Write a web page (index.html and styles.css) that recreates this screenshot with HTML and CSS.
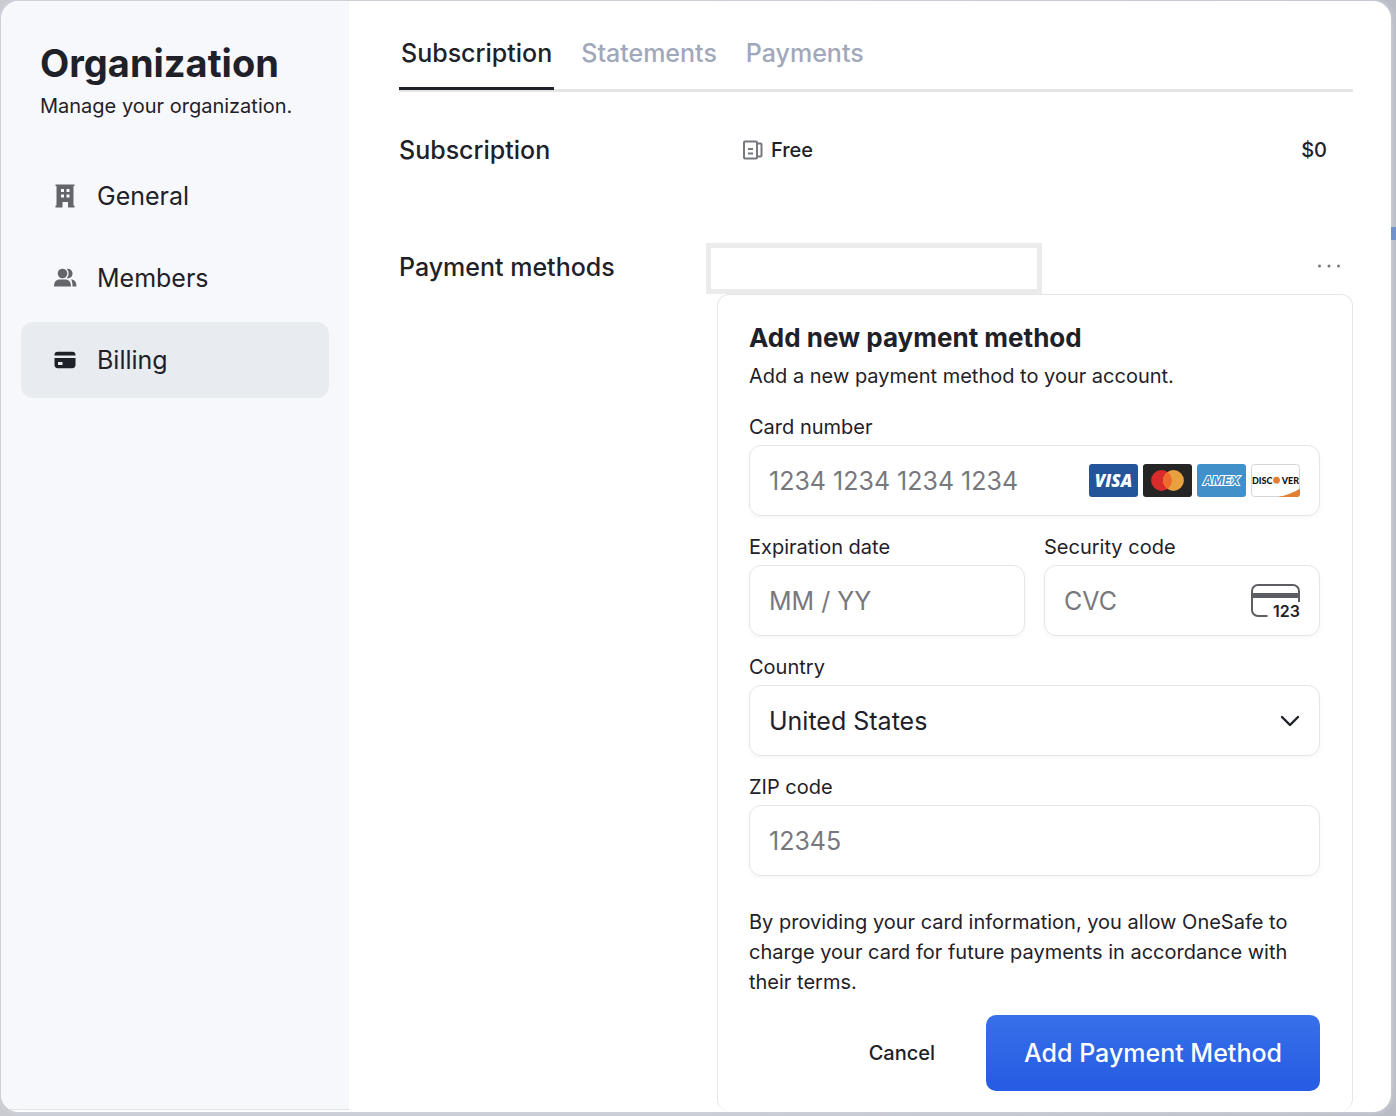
FILE: index.html
```html
<!DOCTYPE html>
<html lang="en">
<head>
    <meta charset="UTF-8">
    <meta name="viewport" content="width=device-width, initial-scale=1.0">
    <title>Organization - Billing</title>
    <link rel="stylesheet" href="styles.css">
</head>
<body>
    <div class="backdrop-mark"></div>

    <div class="modal">
        <aside class="sidebar">
            <h1>Organization</h1>
            <p class="tagline">Manage your organization.</p>
            <nav>
                <a href="#general">
                    <svg width="24" height="24" viewBox="0 0 24 24" fill="#64656b">
                        <path fill-rule="evenodd" d="M2.500 0.500H21.500V2H20.500V21.500H21.500V23.500H15V18H9.500V23.500H2.500V21.500H3.500V2H2.500ZM8 5V8H11V5ZM13.500 5V8H16.500V5ZM8 10.500V13.500H11V10.500ZM13.500 10.500V13.500H16.500V10.500Z"/>
                    </svg>
                    General
                </a>
                <a href="#members">
                    <svg width="24" height="24" viewBox="0 0 24 24" fill="#64656b">
                        <circle cx="9.500" cy="7.500" r="4.800"/>
                        <path d="M13.800 2.800a4.800 4.800 0 1 1 0 9.400a7 7 0 0 0 0-9.400zM1 20.500c0-4.500 2-7 6-7h5c4 0 6 2.500 6 7zM18 13.500c3.500 0 5.500 2.500 5.500 7h-4c0-3-.4-5.400-1.500-7z"/>
                    </svg>
                    Members
                </a>
                <a href="#billing" class="active">
                    <svg width="24" height="24" viewBox="0 0 24 24" fill="#1f2128">
                        <path d="M1.500 7c0-2 1.200-3.200 3.200-3.200h14.600c2 0 3.200 1.200 3.200 3.200v.5h-21z"/>
                        <path fill-rule="evenodd" d="M1.500 10h21v7c0 2-1.200 3.200-3.200 3.200H4.700c-2 0-3.200-1.200-3.200-3.200zM5 14v3h4.500v-3z"/>
                    </svg>
                    Billing
                </a>
            </nav>
        </aside>

        <main>
            <nav class="tabs">
                <a href="#subscription" class="active">Subscription</a>
                <a href="#statements">Statements</a>
                <a href="#payments">Payments</a>
            </nav>

            <section class="row plan-row">
                <h2>Subscription</h2>
                <div class="plan">
                    <svg width="20" height="20" viewBox="0 0 20 20" fill="none" stroke="#77787e" stroke-width="2">
                        <rect x="1" y="1.500" width="13" height="17" rx="1"/>
                        <path d="M14 3.500h3.500a1 1 0 0 1 1 1v11a1 1 0 0 1-1 1H14M5 9h5M5 13.500h5"/>
                    </svg>
                    <span>Free</span>
                    <span class="price">$0</span>
                </div>
            </section>

            <section class="row">
                <h2>Payment methods</h2>
                <div>
                    <div class="methods">
                        <div class="saved-method"></div>
                        <button type="button" class="more" aria-label="More options">
                            <svg width="24" height="6" viewBox="0 0 24 6" fill="#77787e">
                                <circle cx="2.500" cy="3" r="1.500"/>
                                <circle cx="12" cy="3" r="1.500"/>
                                <circle cx="21.500" cy="3" r="1.500"/>
                            </svg>
                        </button>
                    </div>

                    <form class="card">
                        <h3>Add new payment method</h3>
                        <p class="subtitle">Add a new payment method to your account.</p>

                        <div class="field">
                            <label for="number">Card number</label>
                            <div class="control">
                                <input type="text" id="number" placeholder="1234 1234 1234 1234">
                                <div class="brands">
                                    <svg width="49" height="33" viewBox="0 0 49 33">
                                        <rect width="49" height="33" rx="3" fill="#24559b"/>
                                        <text x="24.500" y="22.500" text-anchor="middle" font-family="Open Sans" font-size="17" font-weight="800" font-style="italic" fill="#fff">VISA</text>
                                    </svg>
                                    <svg width="49" height="33" viewBox="0 0 49 33">
                                        <rect width="49" height="33" rx="3" fill="#252525"/>
                                        <circle cx="18.500" cy="16.500" r="10.400" fill="#d92b2b"/>
                                        <circle cx="30.500" cy="16.500" r="10.400" fill="#e9a13f"/>
                                        <path d="M24.500 8a10.400 10.400 0 0 1 0 17a10.400 10.400 0 0 1 0-17z" fill="#ec6b2d"/>
                                    </svg>
                                    <svg width="49" height="33" viewBox="0 0 49 33">
                                        <rect width="49" height="33" rx="3" fill="#4190ca"/>
                                        <text x="24.500" y="21" text-anchor="middle" font-family="Inter" font-size="12" font-weight="700" font-style="italic" fill="#4190ca" stroke="#fff" stroke-width="2" paint-order="stroke">AMEX</text>
                                    </svg>
                                    <svg width="49" height="33" viewBox="0 0 49 33">
                                        <rect x="0.500" y="0.500" width="48" height="32" rx="3" fill="#fff" stroke="#d6d6d6"/>
                                        <path d="M27 33C36 31 43 28.500 49 24.500V30a3 3 0 0 1-3 3z" fill="#e37f32"/>
                                        <text x="1" y="19.500" font-family="Lato" font-size="9" font-weight="900" fill="#111">DISC</text>
                                        <circle cx="25.500" cy="16.200" r="3.400" fill="#e37f32"/>
                                        <text x="48" y="19.500" text-anchor="end" font-family="Lato" font-size="9" font-weight="900" fill="#111">VER</text>
                                    </svg>
                                </div>
                            </div>
                        </div>

                        <div class="field-pair">
                            <div class="field">
                                <label for="expiry">Expiration date</label>
                                <div class="control">
                                    <input type="text" id="expiry" placeholder="MM / YY">
                                </div>
                            </div>
                            <div class="field">
                                <label for="cvc">Security code</label>
                                <div class="control">
                                    <input type="text" id="cvc" placeholder="CVC">
                                    <svg width="50" height="36" viewBox="0 0 50 36" fill="none" stroke="#5d5e63">
                                        <path stroke-width="2" d="M17.500 33H8a6 6 0 0 1-6-6V8a6 6 0 0 1 6-6h35a6 6 0 0 1 6 6v11"/>
                                        <path stroke-width="5" d="M2 12.500h47"/>
                                        <text x="50" y="34" text-anchor="end" font-family="Inter" font-size="16" font-weight="600" fill="#1f2128" stroke="none">123</text>
                                    </svg>
                                </div>
                            </div>
                        </div>

                        <div class="field">
                            <label for="country">Country</label>
                            <div class="control">
                                <select id="country">
                                    <option>United States</option>
                                </select>
                                <svg class="chevron" width="20" height="12" viewBox="0 0 20 12" fill="none" stroke="#1f2128" stroke-width="2.400" stroke-linecap="round" stroke-linejoin="round">
                                    <path d="M2 2l8 8 8-8"/>
                                </svg>
                            </div>
                        </div>

                        <div class="field">
                            <label for="zip">ZIP code</label>
                            <div class="control">
                                <input type="text" id="zip" placeholder="12345">
                            </div>
                        </div>

                        <p class="terms">By providing your card information, you allow OneSafe to charge your card for future payments in accordance with their terms.</p>

                        <div class="actions">
                            <button type="button" class="cancel">Cancel</button>
                            <button type="submit" class="submit">Add Payment Method</button>
                        </div>
                    </form>
                </div>
            </section>
        </main>
    </div>
</body>
</html>
```
FILE: styles.css
```css
* {
    box-sizing: border-box;
}
body {
    margin: 0;
    padding: 1px 5px 4px 1px;
    min-height: 100vh;
    display: flex;
    position: relative;
    font-family: Inter, "Liberation Sans", sans-serif;
    font-size: 20px;
    color: #1f2128;
    background: linear-gradient(to right, #c9cbd1 50%, #b9bcc4);
}
h1, h2, h3, p {
    margin: 0;
}
a {
    color: inherit;
    text-decoration: none;
}
button, input, select {
    font-family: inherit;
    color: inherit;
    border: none;
    background: none;
    padding: 0;
}
/* sliver of the page behind the dialog */
.backdrop-mark {
    position: absolute;
    top: 227px;
    right: 0;
    width: 5px;
    height: 13px;
    background: #6f91cc;
}
.modal {
    flex: 1;
    min-width: 0;
    display: flex;
    background: #fff;
    border-radius: 18px;
    overflow: hidden;
    box-shadow: 0 0 6px #d4d7e2;
}

/* sidebar */
.sidebar {
    flex: 0 0 348px;
    margin-bottom: 2px;
    padding: 36px 20px;
    background: #f7f8fc;
    border-bottom: 1px solid #dfe1e6;
}
.sidebar h1 {
    padding-left: 19px;
    font-size: 38px;
    line-height: 52px;
}
.tagline {
    padding-left: 19px;
    line-height: 34px;
}
.sidebar nav {
    display: flex;
    flex-direction: column;
    gap: 6px;
    margin-top: 35px;
}
.sidebar nav a {
    display: flex;
    align-items: center;
    gap: 20px;
    height: 76px;
    padding: 0 32px;
    font-size: 25px;
    border-radius: 12px;
}
.sidebar nav .active {
    background: #e8ebf0;
}

/* content */
main {
    flex: 1;
    min-width: 0;
    padding: 20px 38px 0 50px;
}
.tabs {
    display: flex;
    gap: 25px;
    border-bottom: 3px solid #e5e5e5;
    font-size: 25px;
    font-weight: 500;
    color: #a0a8ba;
}
.tabs a {
    height: 69px;
    padding: 0 2px;
    line-height: 64px;
    margin-bottom: -1px;
    border-bottom: 3px solid transparent;
}
.tabs .active {
    color: #1f2128;
    border-color: #1f2128;
}
.row {
    display: grid;
    grid-template-columns: minmax(0, 1fr) minmax(0, 2fr);
}
.row h2 {
    font-size: 25px;
    font-weight: 500;
    line-height: 48px;
}
.plan-row {
    padding: 34px 0 69px;
}
.plan {
    display: flex;
    align-items: center;
    gap: 8px;
    padding: 0 26px;
    font-weight: 500;
}
.price {
    margin-left: auto;
}
.methods {
    display: flex;
    justify-content: space-between;
}
.saved-method {
    width: 336px;
    height: 51px;
    margin-left: -11px;
    border: 5px solid #ebebeb;
}
.more {
    padding: 0 12px 10px;
    cursor: pointer;
}

/* payment form */
.card {
    padding: 23px 32px 20px 31px;
    border: 1px solid #e6e6e6;
    border-bottom: none;
    border-radius: 12px;
}
.card h3 {
    font-size: 26px;
    line-height: 40px;
}
.subtitle {
    line-height: 36px;
    margin-bottom: 17px;
}
.field {
    margin-bottom: 15px;
}
.field label {
    display: block;
    line-height: 32px;
    margin-bottom: 2px;
}
.field-pair {
    display: grid;
    grid-template-columns: repeat(2, minmax(0, 1fr));
    gap: 19px;
}
.control {
    position: relative;
    display: flex;
    align-items: center;
    height: 71px;
    padding: 0 19px;
    border: 1px solid #e6e6e6;
    border-radius: 12px;
    box-shadow: 0 2px 4px rgba(0, 0, 0, 0.04);
}
.control input, .control select {
    flex: 1;
    min-width: 0;
    height: 100%;
    font-size: 25px;
    outline: none;
    appearance: none;
}
.control input::placeholder {
    color: #77787e;
}
.chevron {
    position: absolute;
    right: 19px;
    pointer-events: none;
}
.brands {
    display: flex;
    gap: 5px;
}
.terms {
    margin-top: 31px;
    line-height: 30px;
}
.actions {
    display: flex;
    justify-content: flex-end;
    gap: 51px;
    margin-top: 18px;
}
.actions button {
    font-weight: 500;
    cursor: pointer;
}
.cancel {
    font-size: 20px;
}
.submit {
    height: 76px;
    font-size: 25px;
}
.actions .submit {
    padding: 0 38px;
    color: #fff;
    background: linear-gradient(#3770e9, #265be3);
    border-radius: 10px;
}
```
